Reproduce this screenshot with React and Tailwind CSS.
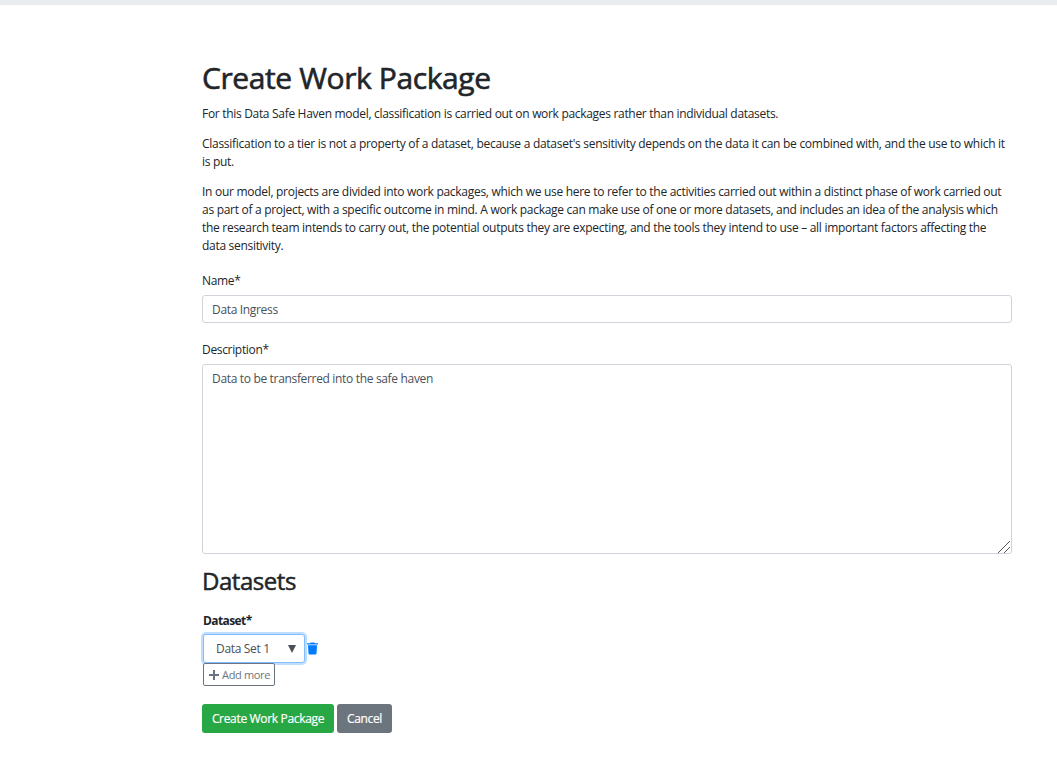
import React from 'react';

const PARAGRAPHS = [
  [
    ['For this Data Safe Haven model, classification is carried out on work packages rather than individual datasets.', 'tracking-[-0.31px]'],
  ],
  [
    ["Classification to a tier is not a property of a dataset, because a dataset's sensitivity depends on the data it can be combined with, and the use to which it", 'tracking-[-0.277px]'],
    ['is put.', 'tracking-[-0.3px]'],
  ],
  [
    ['In our model, projects are divided into work packages, which we use here to refer to the activities carried out within a distinct phase of work carried out', 'tracking-[-0.288px]'],
    ['as part of a project, with a specific outcome in mind. A work package can make use of one or more datasets, and includes an idea of the analysis which', 'tracking-[-0.29px]'],
    ['the research team intends to carry out, the potential outputs they are expecting, and the tools they intend to use – all important factors affecting the', 'tracking-[-0.29px]'],
    ['data sensitivity.', 'tracking-[-0.3px]'],
  ],
];

function Intro() {
  return PARAGRAPHS.map((lines, i) => (
    <p key={i} className="mb-3">
      {lines.map(([text, tracking]) => (
        <span key={text} className={'block whitespace-nowrap ' + tracking}>{text} </span>
      ))}
    </p>
  ));
}

function TrashIcon() {
  return (
    <svg className="ml-[2px] h-[13px] w-[11px] text-[#007bff]" viewBox="0 0 11 13" fill="currentColor">
      <path d="M0 1.2H3.2L3.8 0.4H7.2L7.8 1.2H11V2.6H0ZM1 3.2H10L9.5 11.5Q9.4 12.6 8.4 12.6H2.6Q1.6 12.6 1.5 11.5Z" />
    </svg>
  );
}

export default function App() {
  return (
    <div className="h-[757px] overflow-hidden bg-white font-['Open_Sans',sans-serif] text-[12px] leading-[18px] tracking-[-0.33px] text-[#212529]">
      <div className="h-[5px] bg-[#e9ecef]" />
      <main className="ml-[202px] w-[810px] pt-[55px]">
        <h1 className="mb-[9px] h-9 whitespace-nowrap text-[30px] font-medium leading-9 tracking-[-0.4px] [-webkit-text-stroke:0.6px_#212529]">Create Work Package</h1>
        <Intro />
        <form className="pt-[5px]" onSubmit={(e) => e.preventDefault()}>
          <label htmlFor="name" className="mb-[5px] block">Name*</label>
          <input id="name" defaultValue="Data Ingress" className="block h-7 w-full rounded-[3px] border border-[#ced4da] px-[9px] text-[#495057]" />
          <label htmlFor="description" className="mt-[18px] mb-[5px] block">Description*</label>
          <textarea id="description" defaultValue="Data to be transferred into the safe haven" className="block h-[190px] w-full resize-none rounded-[3px] border border-[#ced4da] px-[9px] py-[5px] text-[#495057]" />
          <svg className="relative -mt-[13px] mr-[2px] ml-auto h-[12px] w-[12px]" viewBox="0 0 12 12" fill="none" stroke="#555">
            <path d="M0 12L12 0M6 12L12 6" />
          </svg>
          <h2 className="mt-[13px] h-[29px] text-[24px] font-medium leading-[29px] tracking-[-0.45px] [-webkit-text-stroke:0.5px_#212529]">Datasets</h2>
          <div className="ml-px">
            <div className="mt-[17px] mb-1 font-bold tracking-[-0.6px]">Dataset*</div>
            <div className="flex items-center">
              <button type="button" className="flex h-[29px] w-[102px] items-center justify-between rounded-[3px] border border-[#80bdff] bg-white pr-[8px] pl-[12px] text-[#495057] shadow-[0_0_0_2px_#bfdeff]">
                <span>Data Set 1</span>
                <svg className="h-[8px] w-[8px]" viewBox="0 0 8 8" fill="#495057"><path d="M0 0H8L4 8Z" /></svg>
              </button>
              <TrashIcon />
            </div>
            <button type="button" className="relative flex h-[23px] w-[72px] items-center rounded-[2px] border border-[#6c757d] bg-white pl-[5px] text-[11px] text-[#6c757d]">
              <svg className="mr-[3px] h-[10px] w-[10px]" viewBox="0 0 10 10" fill="#6c757d"><path d="M4 0H6V4H10V6H6V10H4V6H0V4H4Z" /></svg>
              <span className="whitespace-nowrap">Add more</span>
            </button>
          </div>
          <div className="mt-[18px] flex gap-[3px] text-white [-webkit-text-stroke:0.2px_#fff]">
            <button type="submit" className="h-[29px] w-[132px] whitespace-nowrap rounded-[3px] bg-[#28a745]">Create Work Package</button>
            <button type="button" className="h-[29px] w-[55px] rounded-[3px] bg-[#6c757d]">Cancel</button>
          </div>
        </form>
      </main>
    </div>
  );
}
